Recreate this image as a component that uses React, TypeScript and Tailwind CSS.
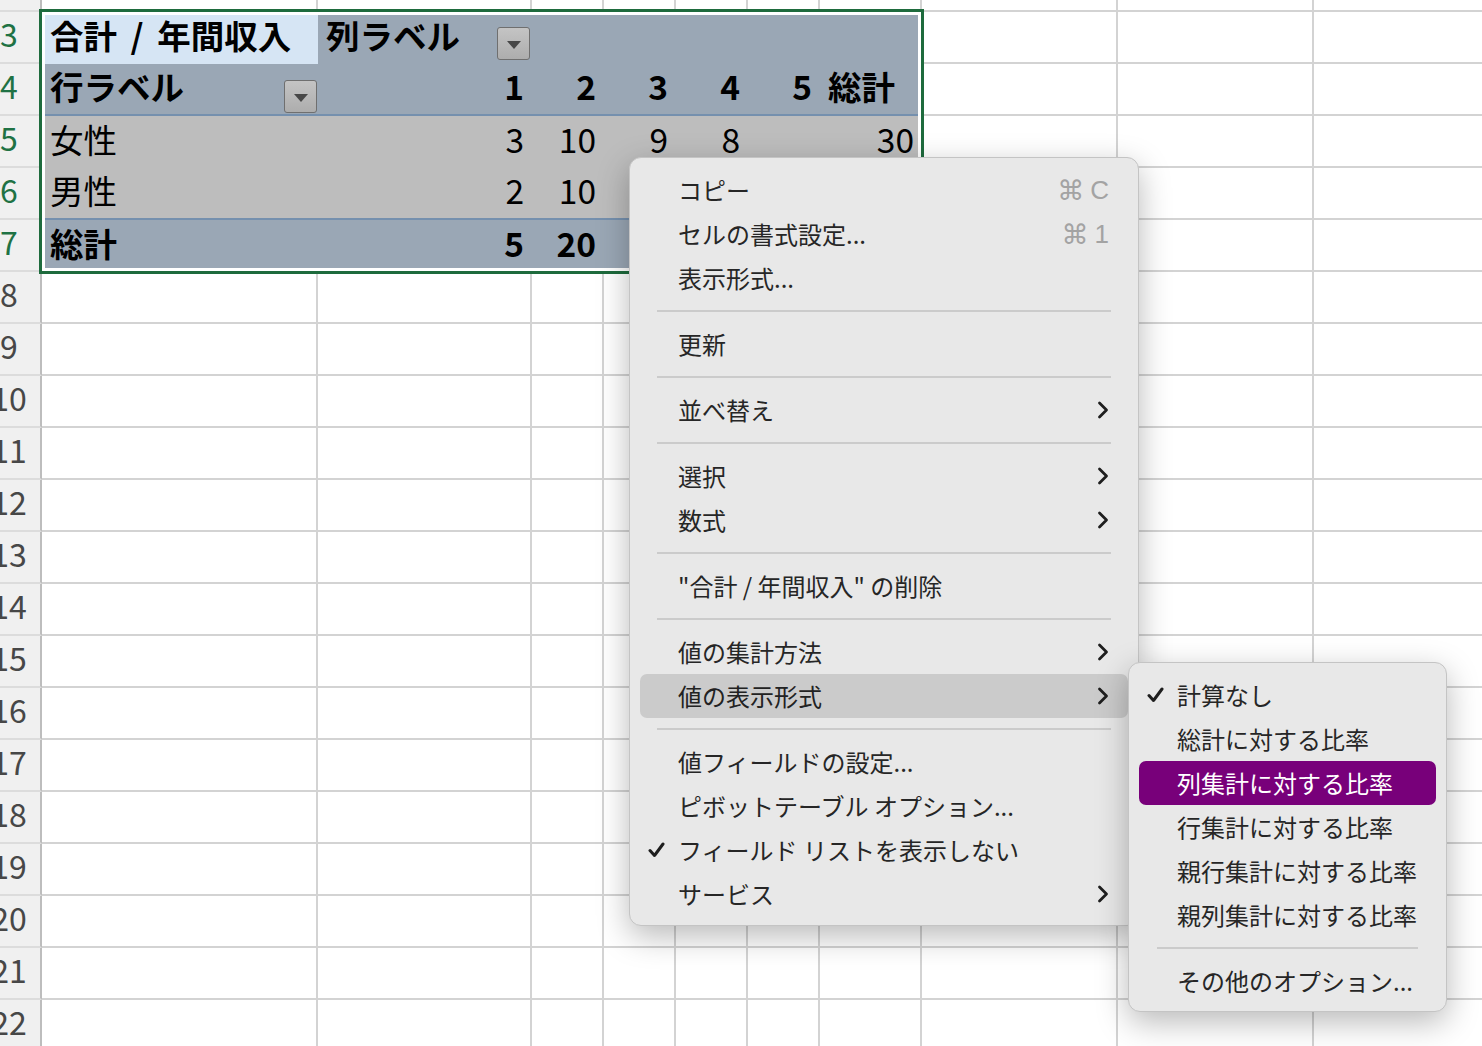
import React from "react";

type Cell = { t?: string; b?: boolean; r?: boolean; dd?: "top" | "bot"; ws?: boolean };

const COLW = [
  "w-[276px]",
  "w-[214px]",
  "w-[72px]",
  "w-[72px]",
  "w-[72px]",
  "w-[72px]",
  "w-[102px]",
  "w-[196px]",
  "w-[196px]",
  "w-[196px]",
];

function RowHeader({ n, sel, h }: { n?: number; sel?: boolean; h: string }) {
  return (
    <div
      className={`w-[42px] shrink-0 ${h} border-r-2 border-r-[#bdbdbd] border-b-2 border-b-[#dcdcdc] bg-[#f0f0f0] flex items-center pb-[8px]`}
    >
      {n !== undefined && (
        <div
          className={`w-[18px] flex justify-center whitespace-nowrap text-[32px] leading-none ${
            sel ? "text-[#1f7244]" : "text-[#474747]"
          }`}
        >
          {n}
        </div>
      )}
    </div>
  );
}

function EmptyCells({ from, h }: { from: number; h: string }) {
  return (
    <>
      {COLW.slice(from).map((w, i) => (
        <div key={i} className={`${w} shrink-0 ${h} border-r-2 border-b-2 border-[#d3d3d3]`} />
      ))}
    </>
  );
}

function Dropdown({ mb, mr }: { mb: string; mr: string }) {
  return (
    <div
      className={`w-[33px] h-[33px] shrink-0 self-end ${mb} ${mr} rounded-[3px] border border-[#6f6f6f] bg-gradient-to-b from-[#c4c4c4] to-[#adadad] flex items-center justify-center`}
    >
      <svg width="16" height="10" viewBox="0 0 16 10" className="mt-[3px]">
        <polygon points="1,1 15,1 8,9" fill="#474747" />
      </svg>
    </div>
  );
}

function PivotRow({
  n,
  cells,
  bgs,
  sep,
}: {
  n: number;
  cells: Cell[];
  bgs: string[];
  sep?: boolean;
}) {
  return (
    <div className="flex h-[52px] shrink-0">
      <RowHeader n={n} sel h="h-[52px]" />
      {cells.map((c, i) => (
        <div
          key={i}
          className={`${COLW[i]} shrink-0 h-[52px] ${bgs[i]} ${
            sep ? "border-b-2 border-b-[#7590ae]" : ""
          } flex items-center px-[8px] pb-[6px] text-[33.5px] leading-none text-black whitespace-nowrap ${
            c.r ? "justify-end" : "justify-between"
          } ${c.b ? "font-bold" : "font-normal"}`}
        >
          {c.t && <span className={c.ws ? "[word-spacing:6px]" : ""}>{c.t}</span>}
          {c.dd === "top" && <Dropdown mb="-mb-[2px]" mr="-mr-[6px]" />}
          {c.dd === "bot" && <Dropdown mb="-mb-[5px]" mr="-mr-[7px]" />}
        </div>
      ))}
      <EmptyCells from={7} h="h-[52px]" />
    </div>
  );
}

function PlainRow({ n }: { n: number }) {
  return (
    <div className="flex h-[52px] shrink-0">
      <RowHeader n={n} h="h-[52px]" />
      <EmptyCells from={0} h="h-[52px]" />
    </div>
  );
}

function Check({ color }: { color: string }) {
  return (
    <svg width="17" height="16" viewBox="0 0 17 16">
      <path
        d="M2 8.5 L6.5 13.5 L15 2"
        fill="none"
        stroke={color}
        strokeWidth="3"
        strokeLinecap="round"
        strokeLinejoin="round"
      />
    </svg>
  );
}

function Chevron() {
  return (
    <svg width="12" height="18" viewBox="0 0 12 18">
      <polyline
        points="2.5,2 9.5,9 2.5,16"
        fill="none"
        stroke="#1e1e1e"
        strokeWidth="2.8"
        strokeLinecap="round"
        strokeLinejoin="round"
      />
    </svg>
  );
}

type MI =
  | { label: string; key?: string; sub?: boolean; check?: boolean; hl?: "gray" | "purple" }
  | "sep";

function MenuItem({ item }: { item: Exclude<MI, "sep"> }) {
  const bg =
    item.hl === "gray"
      ? "bg-[#cbcbcb] text-[#222222]"
      : item.hl === "purple"
      ? "bg-[#78007a] text-white"
      : "text-[#262626]";
  return (
    <div className={`mx-[10px] h-[44px] rounded-[7px] flex items-center pl-[8px] pr-[19px] ${bg}`}>
      <div className="w-[30px] shrink-0 flex items-center">
        {item.check && <Check color={item.hl === "purple" ? "#ffffff" : "#1e1e1e"} />}
      </div>
      <div className="flex-1 whitespace-nowrap">{item.label}</div>
      {item.key && (
        <div className="flex items-center text-[#a3a3a3] whitespace-nowrap">
          <span className="text-[27px] leading-none font-['DejaVu_Sans',sans-serif]">⌘</span>
          <span className="ml-[6px] text-[26px] leading-none font-['Liberation_Sans',sans-serif]">{item.key}</span>
        </div>
      )}
      {item.sub && <Chevron />}
    </div>
  );
}

function MenuSep({ px }: { px: string }) {
  return (
    <div className={`h-[22px] flex items-center ${px}`}>
      <div className="h-[2px] w-full bg-[#cbcbcb]" />
    </div>
  );
}

const MAIN: MI[] = [
  { label: "コピー", key: "C" },
  { label: "セルの書式設定...", key: "1" },
  { label: "表示形式..." },
  "sep",
  { label: "更新" },
  "sep",
  { label: "並べ替え", sub: true },
  "sep",
  { label: "選択", sub: true },
  { label: "数式", sub: true },
  "sep",
  { label: "\"合計 / 年間収入\" の削除" },
  "sep",
  { label: "値の集計方法", sub: true },
  { label: "値の表示形式", sub: true, hl: "gray" },
  "sep",
  { label: "値フィールドの設定..." },
  { label: "ピボットテーブル オプション..." },
  { label: "フィールド リストを表示しない", check: true },
  { label: "サービス", sub: true },
];

const SUB: MI[] = [
  { label: "計算なし", check: true },
  { label: "総計に対する比率" },
  { label: "列集計に対する比率", hl: "purple" },
  { label: "行集計に対する比率" },
  { label: "親行集計に対する比率" },
  { label: "親列集計に対する比率" },
  "sep",
  { label: "その他のオプション..." },
];

const GB = "bg-[#9aa7b5]";
const LB = "bg-[#d6e5f4]";
const GR = "bg-[#bdbdbd]";

export default function App() {
  const rest: number[] = [];
  for (let i = 8; i <= 22; i++) rest.push(i);
  return (
    <div className="relative w-[1482px] h-[1046px] overflow-hidden bg-white font-['Noto_Sans_CJK_JP','Noto_Sans','DejaVu_Sans',sans-serif]">
      <div className="flex flex-col">
        <div className="flex h-[12px] shrink-0">
          <RowHeader h="h-[12px]" />
          <EmptyCells from={0} h="h-[12px]" />
        </div>
        <PivotRow
          n={3}
          bgs={[LB, GB, GB, GB, GB, GB, GB]}
          cells={[
            { t: "合計 / 年間収入", b: true, ws: true },
            { t: "列ラベル", b: true, dd: "top" },
            {},
            {},
            {},
            {},
            {},
          ]}
        />
        <PivotRow
          n={4}
          sep
          bgs={[GB, GB, GB, GB, GB, GB, GB]}
          cells={[
            { t: "行ラベル", b: true, dd: "bot" },
            { t: "1", b: true, r: true },
            { t: "2", b: true, r: true },
            { t: "3", b: true, r: true },
            { t: "4", b: true, r: true },
            { t: "5", b: true, r: true },
            { t: "総計", b: true },
          ]}
        />
        <PivotRow
          n={5}
          bgs={[GR, GR, GR, GR, GR, GR, GR]}
          cells={[
            { t: "女性" },
            { t: "3", r: true },
            { t: "10", r: true },
            { t: "9", r: true },
            { t: "8", r: true },
            { r: true },
            { t: "30", r: true },
          ]}
        />
        <PivotRow
          n={6}
          sep
          bgs={[GR, GR, GR, GR, GR, GR, GR]}
          cells={[
            { t: "男性" },
            { t: "2", r: true },
            { t: "10", r: true },
            { t: "4", r: true },
            { t: "3", r: true },
            { t: "1", r: true },
            { t: "20", r: true },
          ]}
        />
        <PivotRow
          n={7}
          bgs={[GB, GB, GB, GB, GB, GB, GB]}
          cells={[
            { t: "総計", b: true },
            { t: "5", b: true, r: true },
            { t: "20", b: true, r: true },
            { t: "13", b: true, r: true },
            { t: "11", b: true, r: true },
            { t: "1", b: true, r: true },
            { t: "50", b: true, r: true },
          ]}
        />
        {rest.map((n) => (
          <PlainRow key={n} n={n} />
        ))}
      </div>

      {/* selection outline */}
      <div className="absolute left-[39px] top-[9px] w-[885px] h-[265px] border-[3px] border-[#1e6b3d] shadow-[inset_0_0_0_3px_#ffffff] pointer-events-none" />

      {/* main context menu */}
      <div className="absolute left-[629px] top-[157px] w-[510px] rounded-[12px] bg-[#e8e8e8] border border-[#c4c4c4] shadow-[0_10px_32px_rgba(0,0,0,0.28)] pt-[10px] pb-[9px] text-[24px] leading-normal">
        {MAIN.map((m, i) => (m === "sep" ? <MenuSep key={i} px="px-[27px]" /> : <MenuItem key={i} item={m} />))}
      </div>

      {/* submenu */}
      <div className="absolute left-[1128px] top-[662px] w-[319px] rounded-[12px] bg-[#e8e8e8] border border-[#c4c4c4] shadow-[0_10px_32px_rgba(0,0,0,0.28)] pt-[10px] pb-[8px] text-[24px] leading-normal">
        {SUB.map((m, i) => (m === "sep" ? <MenuSep key={i} px="px-[28px]" /> : <MenuItem key={i} item={m} />))}
      </div>
    </div>
  );
}
